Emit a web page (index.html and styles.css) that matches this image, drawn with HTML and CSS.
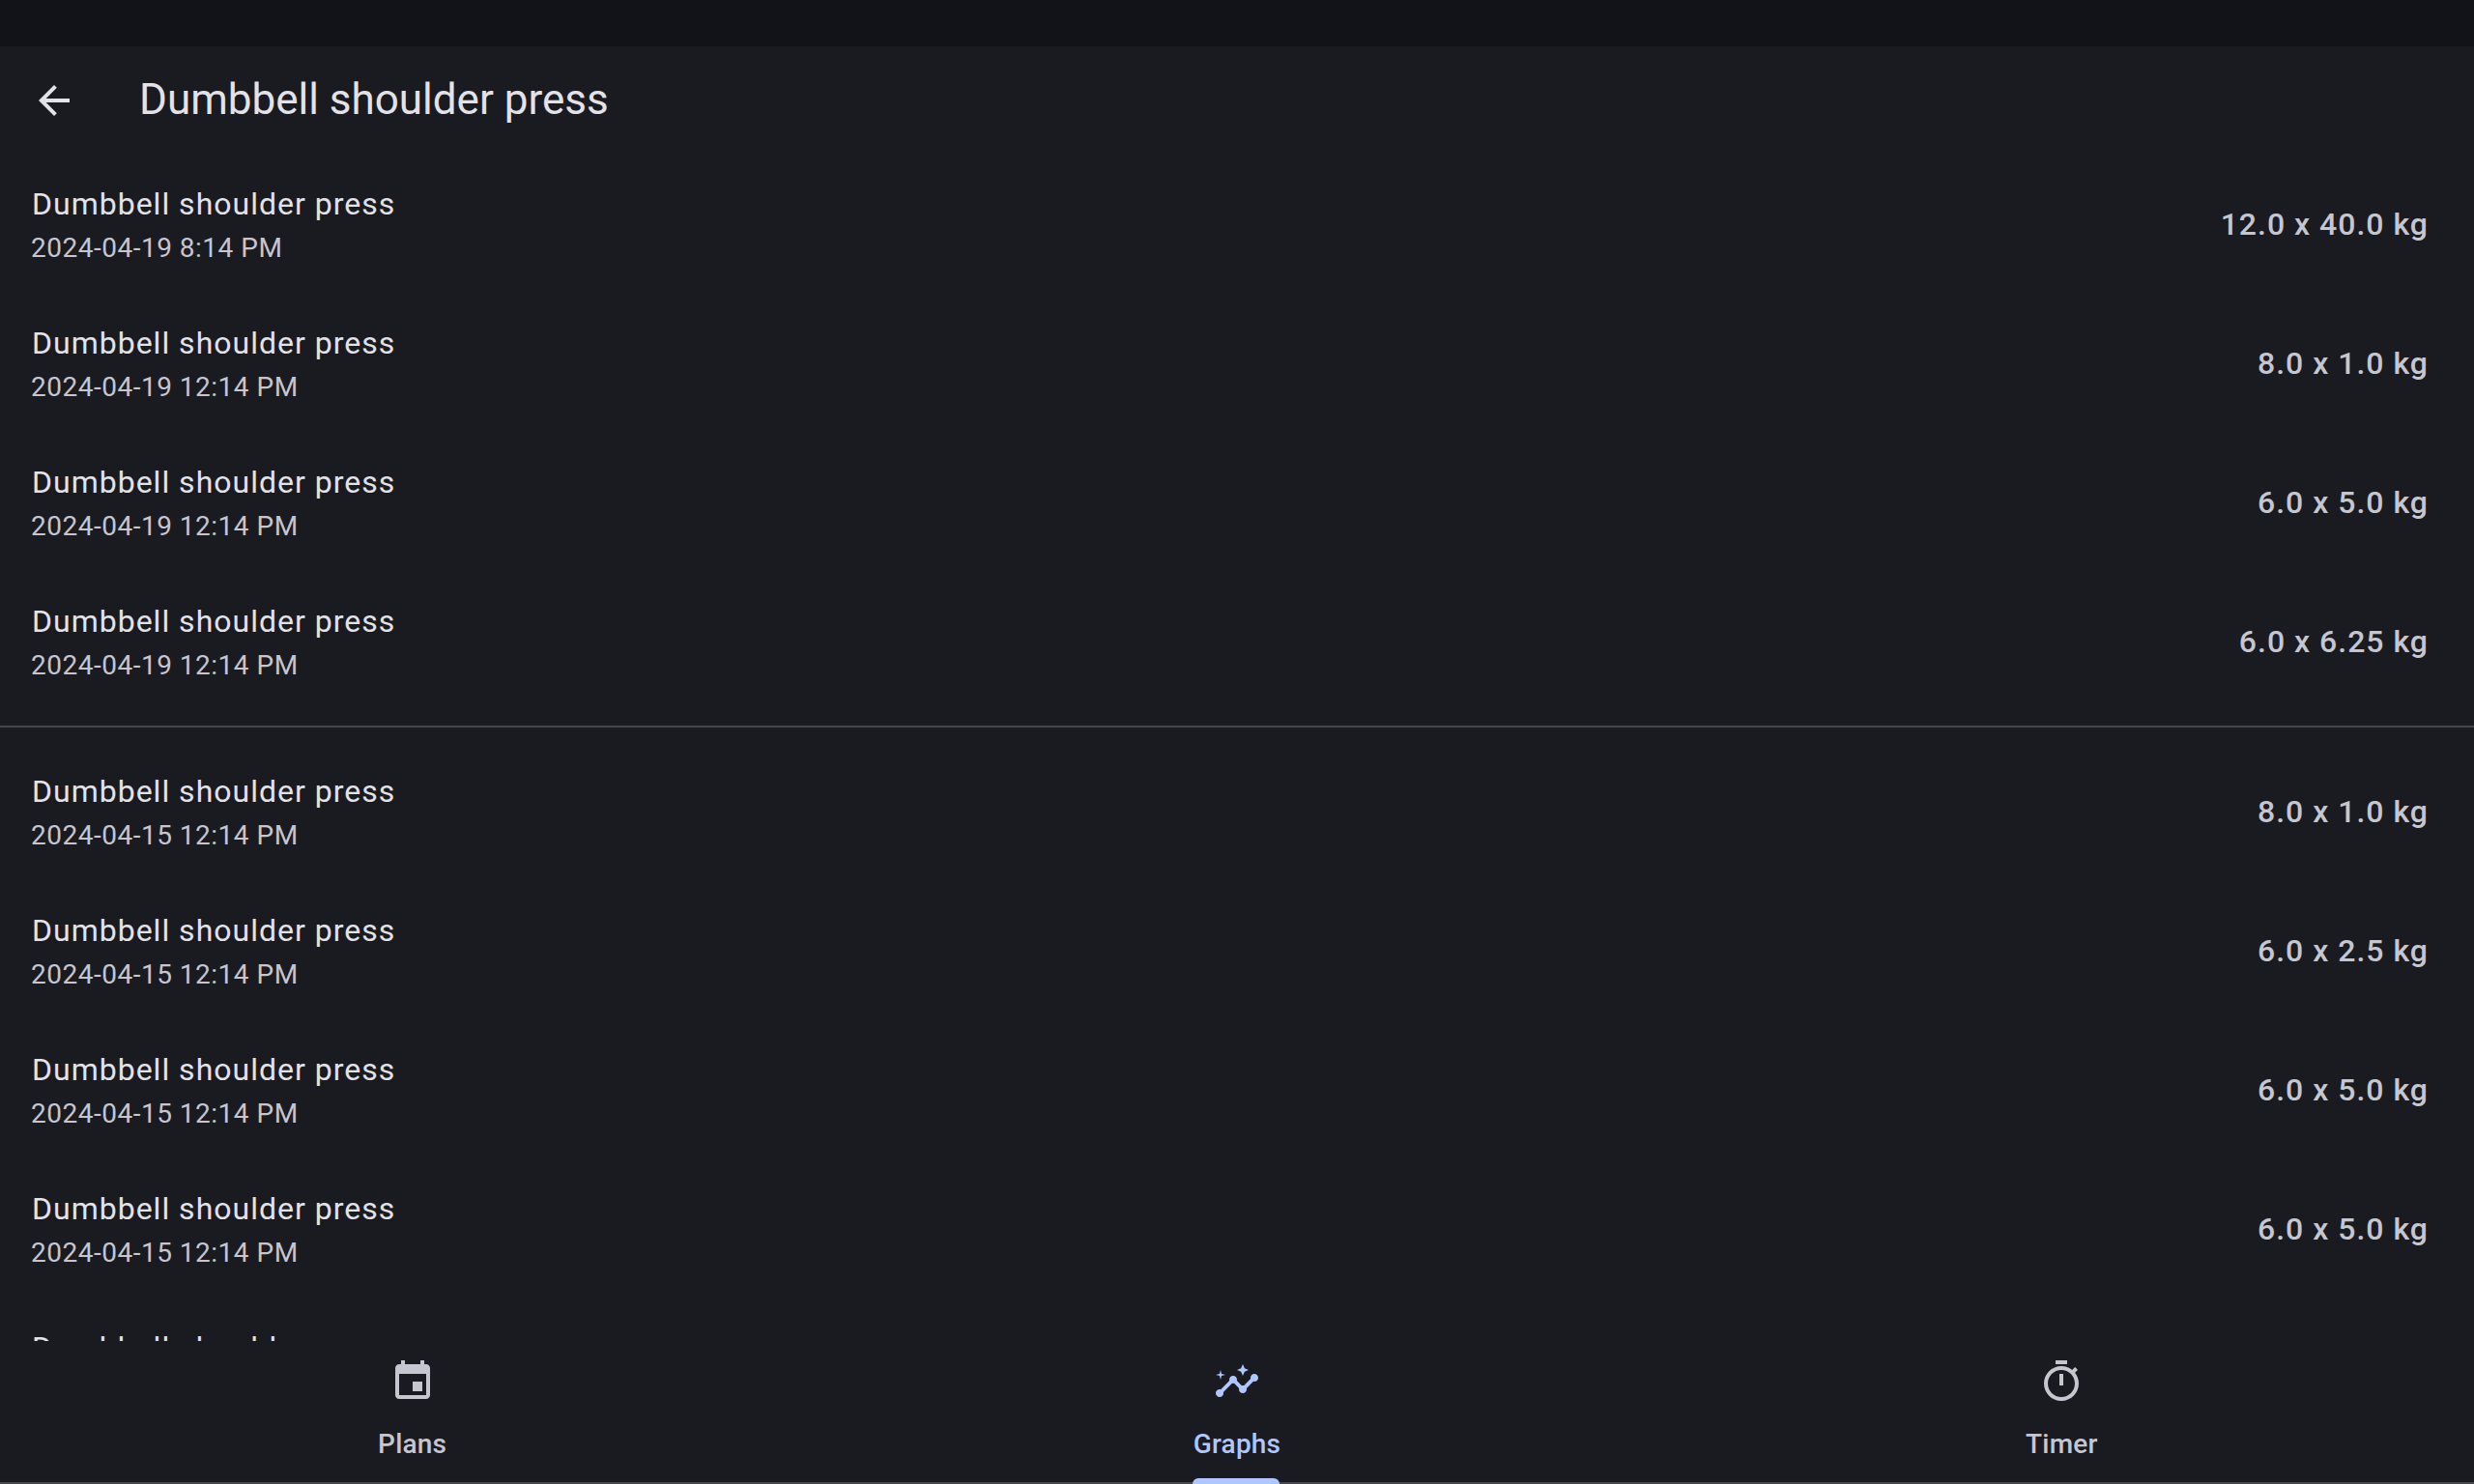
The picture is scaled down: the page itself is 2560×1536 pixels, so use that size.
FILE: index.html
```html
<!DOCTYPE html>
<html>
<head>
  <title>Dumbbell shoulder press</title>
  <link rel="stylesheet" href="styles.css">
</head>
<body>
  <div class="status-bar"></div>
  <header class="app-bar">
    <svg class="back-icon" viewBox="0 0 24 24"><path d="M20 11H7.83l5.59-5.59L12 4l-8 8 8 8 1.41-1.41L7.83 13H20v-2z"/></svg>
    <h1>Dumbbell shoulder press</h1>
  </header>
  <main class="list">
    <div class="row">
      <div><div class="name">Dumbbell shoulder press</div><div class="date">2024-04-19 8:14 PM</div></div>
      <div class="amount">12.0 x 40.0 kg</div>
    </div>
    <div class="row">
      <div><div class="name">Dumbbell shoulder press</div><div class="date">2024-04-19 12:14 PM</div></div>
      <div class="amount">8.0 x 1.0 kg</div>
    </div>
    <div class="row">
      <div><div class="name">Dumbbell shoulder press</div><div class="date">2024-04-19 12:14 PM</div></div>
      <div class="amount">6.0 x 5.0 kg</div>
    </div>
    <div class="row">
      <div><div class="name">Dumbbell shoulder press</div><div class="date">2024-04-19 12:14 PM</div></div>
      <div class="amount">6.0 x 6.25 kg</div>
    </div>
    <hr class="divider">
    <div class="row">
      <div><div class="name">Dumbbell shoulder press</div><div class="date">2024-04-15 12:14 PM</div></div>
      <div class="amount">8.0 x 1.0 kg</div>
    </div>
    <div class="row">
      <div><div class="name">Dumbbell shoulder press</div><div class="date">2024-04-15 12:14 PM</div></div>
      <div class="amount">6.0 x 2.5 kg</div>
    </div>
    <div class="row">
      <div><div class="name">Dumbbell shoulder press</div><div class="date">2024-04-15 12:14 PM</div></div>
      <div class="amount">6.0 x 5.0 kg</div>
    </div>
    <div class="row">
      <div><div class="name">Dumbbell shoulder press</div><div class="date">2024-04-15 12:14 PM</div></div>
      <div class="amount">6.0 x 5.0 kg</div>
    </div>
    <div class="row">
      <div><div class="name">Dumbbell shoulder press</div><div class="date">2024-04-15 12:14 PM</div></div>
      <div class="amount">6.0 x 5.0 kg</div>
    </div>
  </main>
  <nav class="bottom-nav">
    <div class="tab">
      <svg viewBox="0 0 24 24"><path d="M17 12h-5v5h5v-5zM16 1v2H8V1H6v2H5c-1.11 0-1.99.9-1.99 2L3 19c0 1.1.89 2 2 2h14c1.1 0 2-.9 2-2V5c0-1.1-.9-2-2-2h-1V1h-2zm3 18H5V8h14v11z"/></svg>
      <span>Plans</span>
    </div>
    <div class="tab active">
      <svg viewBox="0 0 24 24"><path d="M21 8c-1.45 0-2.26 1.44-1.93 2.51l-3.55 3.56c-.3-.09-.74-.09-1.04 0l-2.55-2.55C12.27 10.45 11.46 9 10 9c-1.45 0-2.27 1.44-1.93 2.52l-4.56 4.55C2.44 15.74 1 16.55 1 18c0 1.1.9 2 2 2 1.45 0 2.26-1.44 1.93-2.51l4.55-4.56c.3.09.74.09 1.04 0l2.55 2.55C12.73 16.55 13.54 18 15 18c1.45 0 2.27-1.44 1.93-2.52l3.56-3.55c1.07.33 2.51-.48 2.51-1.93 0-1.1-.9-2-2-2z"/><path d="M15 9l.94-2.07L18 6l-2.06-.93L15 3l-.92 2.07L12 6l2.08.93z"/><path d="M3.5 11 4 9l2-.5L4 8l-.5-2L3 8l-2 .5L3 9z"/></svg>
      <span>Graphs</span>
    </div>
    <div class="tab">
      <svg viewBox="0 0 24 24"><path d="M15 1H9v2h6V1zm-4 13h2V8h-2v6zm8.03-6.61l1.42-1.42c-.43-.51-.9-.99-1.41-1.41l-1.42 1.42C16.07 4.74 14.12 4 12 4c-4.97 0-9 4.03-9 9s4.02 9 9 9 9-4.03 9-9c0-2.12-.74-4.07-1.97-5.61zM12 20c-3.87 0-7-3.13-7-7s3.13-7 7-7 7 3.13 7 7-3.13 7-7 7z"/></svg>
      <span>Timer</span>
    </div>
  </nav>
</body>
</html>
```
FILE: styles.css
```css
html, body { height: 100%; }
body {
  margin: 0;
  display: flex;
  flex-direction: column;
  overflow: hidden;
  background: #1a1b20;
  color: #e3e2e9;
  font-family: Roboto, "Liberation Sans", sans-serif;
}

.status-bar { height: 48px; flex: none; background: #121318; }

.app-bar { height: 112px; flex: none; display: flex; align-items: center; box-sizing: border-box; padding: 0 32px; }
.back-icon { width: 48px; height: 48px; fill: #e3e2e9; }
.app-bar h1 { margin: -2px 0 0 64px; font-size: 44px; font-weight: 400; line-height: 56px; }

.list { flex: 1; min-height: 0; overflow: hidden; }
.row {
  height: 144px;
  display: flex;
  align-items: center;
  justify-content: space-between;
  padding: 0 47px 0 33px;
}
.name { padding-top: 4px; font-size: 32px; line-height: 44px; letter-spacing: 1px; }
.date { margin: 2px 0 0 -1px; font-size: 28px; line-height: 44px; letter-spacing: 0.5px; color: #c5c6d0; }
.amount { font-size: 32px; font-weight: 500; letter-spacing: 1px; color: #c5c6d0; }
.divider { margin: 15px 0; border: 0; height: 2px; background: #45464f; }

.bottom-nav {
  height: 148px;
  flex: none;
  box-sizing: border-box;
  display: grid;
  grid-template-columns: repeat(3, 1fr);
  border-bottom: 2px solid #45464f;
}
.tab {
  position: relative;
  display: flex;
  flex-direction: column;
  align-items: center;
  padding-top: 18px;
  color: #c5c6d0;
}
.tab svg { width: 48px; height: 48px; fill: currentColor; }
.tab span { margin-top: 21px; font-size: 28px; line-height: 40px; font-weight: 500; letter-spacing: 0.2px; }
.tab.active { color: #b0c6ff; }
.tab.active::after {
  content: "";
  position: absolute;
  left: 50%;
  bottom: -2px;
  width: 90px;
  height: 6px;
  margin-left: -46px;
  border-radius: 6px 6px 0 0;
  background: #b0c6ff;
}
```
